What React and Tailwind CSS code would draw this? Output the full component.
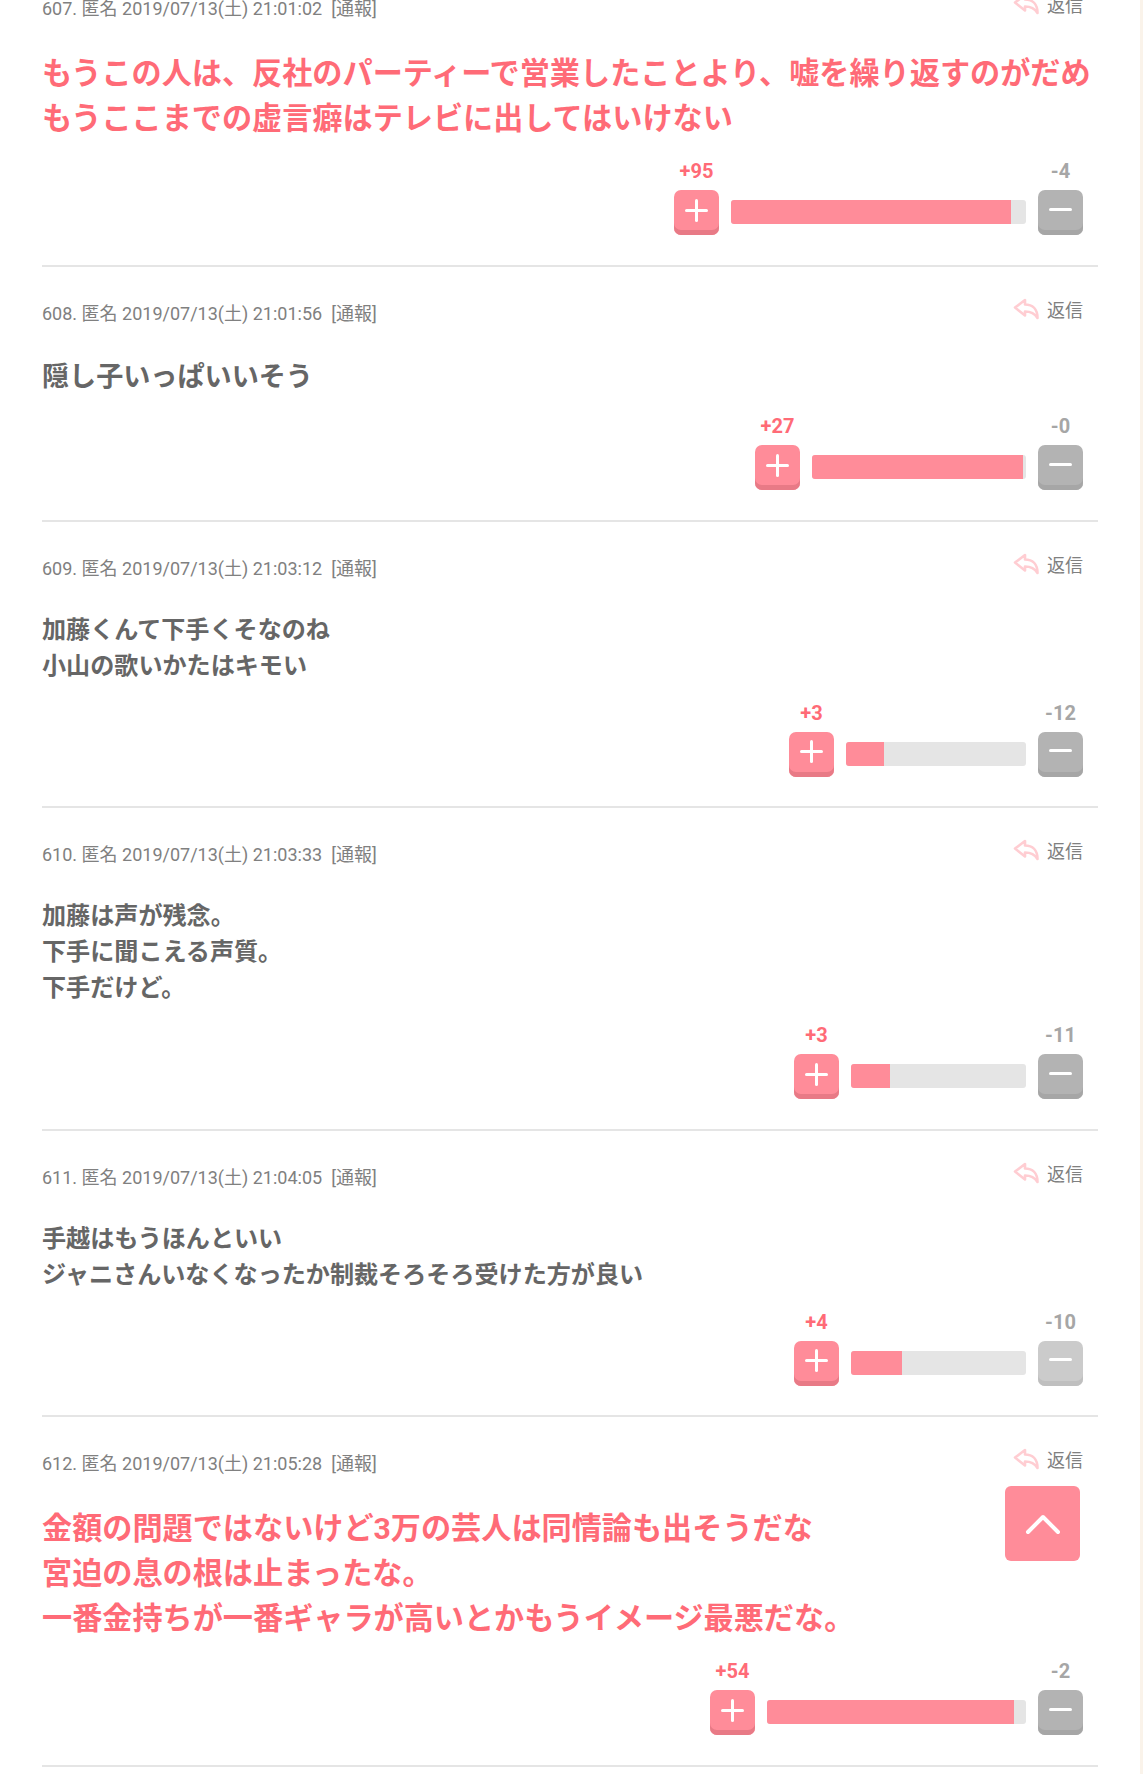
import React from "react";

const comments = [
  {
    no: 607,
    time: "21:01:02",
    size: "lg",
    lines: ["もうこの人は、反社のパーティーで営業したことより、嘘を繰り返すのがだめ", "もうここまでの虚言癖はテレビに出してはいけない"],
    plus: 95,
    minus: 4,
    bar: 295,
    fill: 94.9,
  },
  { no: 608, time: "21:01:56", size: "md", lines: ["隠し子いっぱいいそう"], plus: 27, minus: 0, bar: 214, fill: 98.6 },
  {
    no: 609,
    time: "21:03:12",
    size: "sm",
    lines: ["加藤くんて下手くそなのね", "小山の歌いかたはキモい"],
    plus: 3,
    minus: 12,
    bar: 180,
    fill: 21.1,
  },
  {
    no: 610,
    time: "21:03:33",
    size: "sm",
    lines: ["加藤は声が残念。", "下手に聞こえる声質。", "下手だけど。"],
    plus: 3,
    minus: 11,
    bar: 175,
    fill: 22.3,
  },
  {
    no: 611,
    time: "21:04:05",
    size: "sm",
    lines: ["手越はもうほんといい", "ジャニさんいなくなったか制裁そろそろ受けた方が良い"],
    plus: 4,
    minus: 10,
    bar: 175,
    fill: 29,
    faded: true,
  },
  {
    no: 612,
    time: "21:05:28",
    size: "lg",
    lines: ["金額の問題ではないけど3万の芸人は同情論も出そうだな", "宮迫の息の根は止まったな。", "一番金持ちが一番ギャラが高いとかもうイメージ最悪だな。"],
    plus: 54,
    minus: 2,
    bar: 259,
    fill: 95.4,
  },
];

const bodyStyles = {
  lg: "mt-[29.5px] pb-[1.5px] text-[30.15px] leading-[45px] text-[#ff6b77]",
  md: "mt-[31px] text-[27.1px] leading-[40.5px] text-[#666666]",
  sm: "mt-[31px] text-[24.1px] leading-[36px] text-[#666666]",
};

function ReplyIcon() {
  return (
    <svg width="26" height="22" viewBox="0 0 26 22" fill="none" stroke="#ffcdd2" strokeWidth="2.6" strokeLinejoin="round" strokeLinecap="round" className="-translate-y-[2px]">
      <path d="M2 9.5 L12 2 V6.5 C19.5 6.5 24.5 11 24.5 20 C21.5 15 18 13.5 12 13.5 V17.5 Z" />
    </svg>
  );
}

function VoteButton({ type, faded }) {
  const isPlus = type === "plus";
  const color = isPlus
    ? "bg-[#ff8c99] shadow-[inset_0_-5px_0_#e87a86]"
    : faded
      ? "bg-[#cbcbcb] shadow-[inset_0_-5px_0_#bfbfbf]"
      : "bg-[#b3b3b3] shadow-[inset_0_-5px_0_#a6a6a6]";
  return (
    <div className={`flex h-[45px] w-[45px] items-center justify-center rounded-[7px] pb-[5px] ${color}`}>
      <svg width="23" height="23" viewBox="0 0 23 23" stroke="#ffffff" strokeWidth="3" strokeLinecap="round" className={isPlus ? "" : "-translate-y-[1px]"}>
        <path d="M1.5 11.5 H21.5" />
        {isPlus && <path d="M11.5 1.5 V21.5" />}
      </svg>
    </div>
  );
}

function Comment({ c }) {
  return (
    <div className="border-b-2 border-[#e5e5e5] pt-[35px] pb-[29.5px]">
      <div className="flex items-start justify-between pr-[15px]">
        <div className="text-[18px] leading-[24px] text-[#808080]">
          {c.no}. 匿名 2019/07/13(土) {c.time}
          <span className="ml-[9px]">[通報]</span>
        </div>
        <div className="flex -translate-y-[3px] items-center gap-[8px] text-[18px] leading-[24px] text-[#808080]">
          <ReplyIcon />
          <span>返信</span>
        </div>
      </div>
      <div className={`font-bold ${bodyStyles[c.size]}`}>
        {c.lines.map((line) => (
          <div key={line}>{line}</div>
        ))}
      </div>
      <div className="mt-[17px] flex items-end justify-end gap-[12px] pr-[15px]">
        <div className="flex w-[45px] flex-col items-center gap-[7px]">
          <span className="text-[20px] leading-[24px] font-bold text-[#ff6b77]">+{c.plus}</span>
          <VoteButton type="plus" />
        </div>
        <div className="mb-[11px] h-[24px] overflow-hidden rounded-[3px] bg-[#e5e5e5]" style={{ width: c.bar }}>
          <div className="h-full bg-[#ff8c99]" style={{ width: `${c.fill}%` }} />
        </div>
        <div className="flex w-[45px] flex-col items-center gap-[7px]">
          <span className="text-[20px] leading-[24px] font-bold text-[#a6a6a6]">-{c.minus}</span>
          <VoteButton type="minus" faded={c.faded} />
        </div>
      </div>
    </div>
  );
}

export default function App() {
  return (
    <div className="relative flex h-[1774px] overflow-hidden bg-white font-[Roboto,'Noto_Sans_CJK_JP',sans-serif]">
      <div className="min-w-0 flex-1 pr-[42px] pl-[42px]">
        <div className="-mt-[37.6px]">
          {comments.map((c) => (
            <Comment key={c.no} c={c} />
          ))}
        </div>
      </div>
      <div className="w-[3px] shrink-0 bg-[#faf3ea]" />
      <div className="absolute top-[1486px] left-[1005px] flex h-[75px] w-[75px] items-center justify-center rounded-[6px] bg-[#ff8c99]">
        <svg width="36" height="22" viewBox="0 0 36 22" fill="none" stroke="#ffffff" strokeWidth="4" strokeLinecap="round" strokeLinejoin="round">
          <path d="M3 19 L18 4 L33 19" />
        </svg>
      </div>
    </div>
  );
}
